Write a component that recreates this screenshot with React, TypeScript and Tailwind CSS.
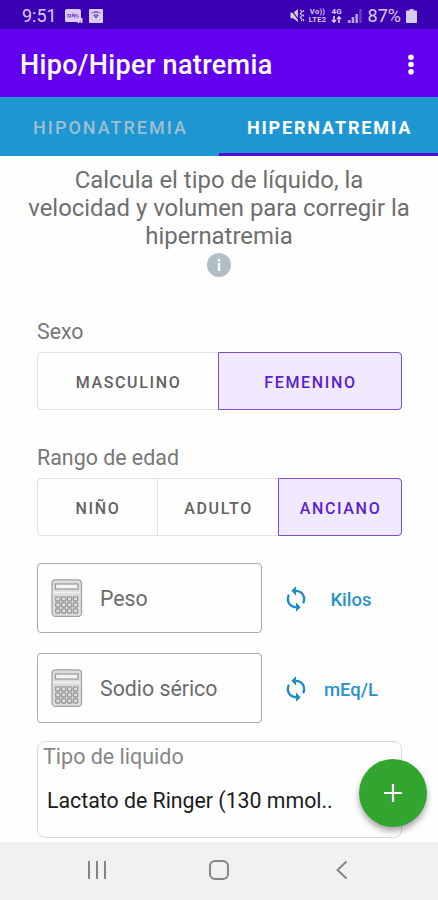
import React, { useState } from "react";
import { MdSync } from "react-icons/md";

type ToggleProps = {
  options: { label: string; width: string }[];
  value: string;
  onChange: (value: string) => void;
};

const ToggleGroup: React.FC<ToggleProps> = ({ options, value, onChange }) => (
  <div className="flex h-[58px] w-[365px]">
    {options.map(({ label, width }) => (
      <button
        key={label}
        type="button"
        onClick={() => onChange(label)}
        className={`${width} -mr-px shrink-0 border pl-px pt-[3px] text-[16px] font-medium tracking-[1.65px] first:rounded-l-[4px] last:mr-0 last:rounded-r-[4px] ${
          value === label
            ? "relative border-[#7a4fd0] bg-[#f1e9fd] text-[#5a1fd0]"
            : "border-[#e2e2e2] text-[#626262]"
        }`}
      >
        {label}
      </button>
    ))}
  </div>
);

const CalculatorIcon = () => (
  <svg width="32" height="38" viewBox="0 0 32 38" fill="none">
    <rect x="1" y="0.8" width="29.5" height="36.6" rx="3.5" fill="#dcdcdc" stroke="#a3a3a3" strokeWidth="1.3" />
    <path d="M1.7 13.5h28" stroke="#efefef" strokeWidth="2" />
    <rect x="4.5" y="5" width="22.5" height="5" fill="#f4f4f4" stroke="#999" strokeWidth="1.2" />
    {[17.8, 23.8, 29.8].map((y) =>
      [4.7, 10.6, 16.5, 22.4].map((x) => (
        <rect key={`${x}-${y}`} x={x} y={y} width="4.2" height="4.2" rx="0.8" fill="#e0e0e0" stroke="#989898" strokeWidth="1.3" />
      ))
    )}
  </svg>
);

const NumberRow: React.FC<{ label: string; unit: string }> = ({ label, unit }) => (
  <div className="flex h-[70px] items-center">
    <div className="flex h-full w-[225px] shrink-0 items-center rounded-[4px] border border-[#a8a8a8] pl-[13px]">
      <CalculatorIcon />
      <span className="ml-[17px] pt-px text-[21.3px] leading-none text-[#6c6c6c]">{label}</span>
    </div>
    <MdSync className="ml-[20px] mt-[2px] size-[28px] shrink-0 text-[#1c8cc9]" />
    <span className="mt-[5px] w-[82px] text-center text-[18.5px] font-medium text-[#2a92cb]">{unit}</span>
  </div>
);

const StatusBar = () => (
  <div className="flex h-[29px] items-center bg-[#3a00b3] pl-[22px] pr-[21px] pt-[2px] text-[#d9ccf2]">
    <span className="text-[18px] leading-none">9:51</span>
    <svg className="ml-[8px]" width="18" height="14" viewBox="0 0 18 14">
      <rect width="16" height="13" rx="1.5" fill="currentColor" />
      <path d="M3 8V5.500h2.500V8zM7 8l1-3 1.500 3 1-3M12 5v3h2" fill="none" stroke="#7857bd" strokeWidth="1.200" />
      <path d="M13.500 9v5M16.500 9v5" stroke="currentColor" strokeWidth="2" />
    </svg>
    <svg className="ml-[6px]" width="14" height="14" viewBox="0 0 14 14">
      <rect width="14" height="14" rx="1" fill="currentColor" />
      <path d="M2.500 4q4.500-3 9 0M4.500 6.300q2.500-1.800 5 0L7 9z" fill="#8565c5" stroke="#8565c5" />
    </svg>
    <div className="ml-auto flex items-center">
      <svg width="16" height="15" viewBox="0 0 16 16">
        <path d="M1 5h3l5-4v14L4 11H1z" fill="currentColor" />
        <path d="M1 1l9 12" stroke="#3a00b3" strokeWidth="1.200" />
        <path d="M11.500 2l2 2-2 2 2 2-2 2 2 2-1 2M15 2v2M15 7v2M15 12v2" fill="none" stroke="currentColor" strokeWidth="1.200" />
      </svg>
      <div className="ml-[3px] w-[20px] text-center text-[7.5px] font-bold leading-[8px] tracking-[0.3px]">
        <div>Vo))</div>
        <div>LTE2</div>
      </div>
      <div className="ml-[3px] flex w-[12px] flex-col items-center text-[8px] font-bold leading-[8px]">
        <span>4G</span>
        <svg width="11" height="7" viewBox="0 0 10 7">
          <path d="M2.500 0v6M.5 4l2 2 2-2M7.500 7V1M5.500 3l2-2 2 2" fill="none" stroke="currentColor" strokeWidth="1.600" />
        </svg>
      </div>
      <svg className="ml-[5px] mr-px" width="14" height="14" viewBox="0 0 14 14" fill="currentColor">
        <path d="M0 11h2.500v3H0zM3.700 8h2.500v6H3.700zM7.400 5h2.500v9H7.400z" opacity=".8" />
        <path d="M11.200 0h2.500v14h-2.500z" opacity=".3" />
      </svg>
      <span className="ml-[5px] text-[18px] leading-none">87%</span>
      <svg className="ml-[5px]" width="11" height="14" viewBox="0 0 11 14" fill="currentColor">
        <path d="M3.500 0h4v1.500H10a1 1 0 011 1V13a1 1 0 01-1 1H1a1 1 0 01-1-1V2.500a1 1 0 011-1h2.500z" />
      </svg>
    </div>
  </div>
);

const App: React.FC = () => {
  const [tab, setTab] = useState("HIPERNATREMIA");
  const [sex, setSex] = useState("FEMENINO");
  const [age, setAge] = useState("ANCIANO");

  return (
    <div className="relative flex h-[900px] w-[438px] flex-col overflow-hidden bg-[#fefefe] font-[Roboto,sans-serif]">
      <StatusBar />

      {/* App bar */}
      <header className="flex h-[68px] items-center justify-between bg-[#6200ee] pl-[20px] pr-[23px] pt-[3px] text-white">
        <h1 className="pt-[2px] text-[27px] font-medium leading-none tracking-[0.33px]">Hipo/Hiper natremia</h1>
        <svg width="8" height="22" viewBox="0 0 8 22" fill="currentColor">
          <circle cx="4" cy="3.200" r="2.800" />
          <circle cx="4" cy="10.500" r="2.800" />
          <circle cx="4" cy="17.800" r="2.800" />
        </svg>
      </header>

      {/* Tabs */}
      <nav className="grid h-[59px] grid-cols-2 bg-[#1e96d2]">
        {["HIPONATREMIA", "HIPERNATREMIA"].map((name) => (
          <button
            key={name}
            type="button"
            onClick={() => setTab(name)}
            className={`border-b-[3px] pt-[5px] text-[18px] ${
              tab === name
                ? "border-[#4a10d8] pl-[2px] font-bold tracking-[1.85px] text-white"
                : "border-transparent pl-[2px] font-medium tracking-[2px] text-[#9dbfd0]"
            }`}
          >
            {name}
          </button>
        ))}
      </nav>

      {/* Form */}
      <main className="flex flex-1 flex-col px-[37px]">
        <p className="-mx-[17px] pt-[10px] text-center text-[23.9px] leading-[28px] text-[#6e6e6e]">
          Calcula el tipo de líquido, la
          <br />
          velocidad y volumen para corregir la
          <br />
          hipernatremia
        </p>
        <svg className="mt-[3px] self-center" width="24" height="24" viewBox="0 0 24 24">
          <circle cx="12" cy="12" r="12" fill="#b0bec5" />
          <path d="M10.800 6h2.400v2.400h-2.400zM10.800 10h2.400v8h-2.400z" fill="#fff" />
        </svg>

        <label className="mt-[43px] text-[21.3px] leading-[24px] text-[#777]">Sexo</label>
        <div className="mt-[8px]">
          <ToggleGroup
            value={sex}
            onChange={setSex}
            options={[
              { label: "MASCULINO", width: "w-[182px]" },
              { label: "FEMENINO", width: "w-[184px]" },
            ]}
          />
        </div>

        <label className="mt-[36px] text-[21.4px] leading-[24px] text-[#777]">Rango de edad</label>
        <div className="mt-[8px]">
          <ToggleGroup
            value={age}
            onChange={setAge}
            options={[
              { label: "NIÑO", width: "w-[121px]" },
              { label: "ADULTO", width: "w-[122px]" },
              { label: "ANCIANO", width: "w-[124px]" },
            ]}
          />
        </div>

        <div className="mt-[27px] flex flex-col gap-5">
          <NumberRow label="Peso" unit="Kilos" />
          <NumberRow label="Sodio sérico" unit="mEq/L" />
        </div>

        <div className="mt-[18px] h-[97px] w-[365px] rounded-[8px] border border-[#dadada] pl-[5px] pt-[3px]">
          <div className="text-[21.5px] leading-[24px] text-[#868686]">Tipo de liquido</div>
          <div className="ml-[4px] mt-[20px] text-[21.3px] leading-[24px] text-[#1c1c1c]">Lactato de Ringer (130 mmol..</div>
        </div>
      </main>

      <button
        type="button"
        className="absolute left-[359px] top-[759px] flex size-[68px] items-center justify-center rounded-full bg-[#31a52f] shadow-[0_4px_6px_rgba(0,0,0,0.35)]"
      >
        <svg width="18" height="18" viewBox="0 0 18 18" stroke="#fff" strokeWidth="2.200">
          <path d="M9 0v18M0 9h18" />
        </svg>
      </button>

      {/* System navigation */}
      <footer className="flex h-[58px] items-center bg-[#f1f1f1] pb-[2px] pl-[87px]">
        <svg width="20" height="20" viewBox="0 0 20 20" stroke="#858585" strokeWidth="2">
          <path d="M2 1v18M10 1v18M18 1v18" />
        </svg>
        <svg className="ml-[102px]" width="20" height="20" viewBox="0 0 20 20" fill="none" stroke="#858585" strokeWidth="2">
          <rect x="1" y="1" width="18" height="18" rx="5" />
        </svg>
        <svg className="ml-[107px]" width="12" height="20" viewBox="0 0 12 20" fill="none" stroke="#858585" strokeWidth="2">
          <path d="M10.500 1.500L1.500 10l9 8.500" />
        </svg>
      </footer>
    </div>
  );
};

export default App;
